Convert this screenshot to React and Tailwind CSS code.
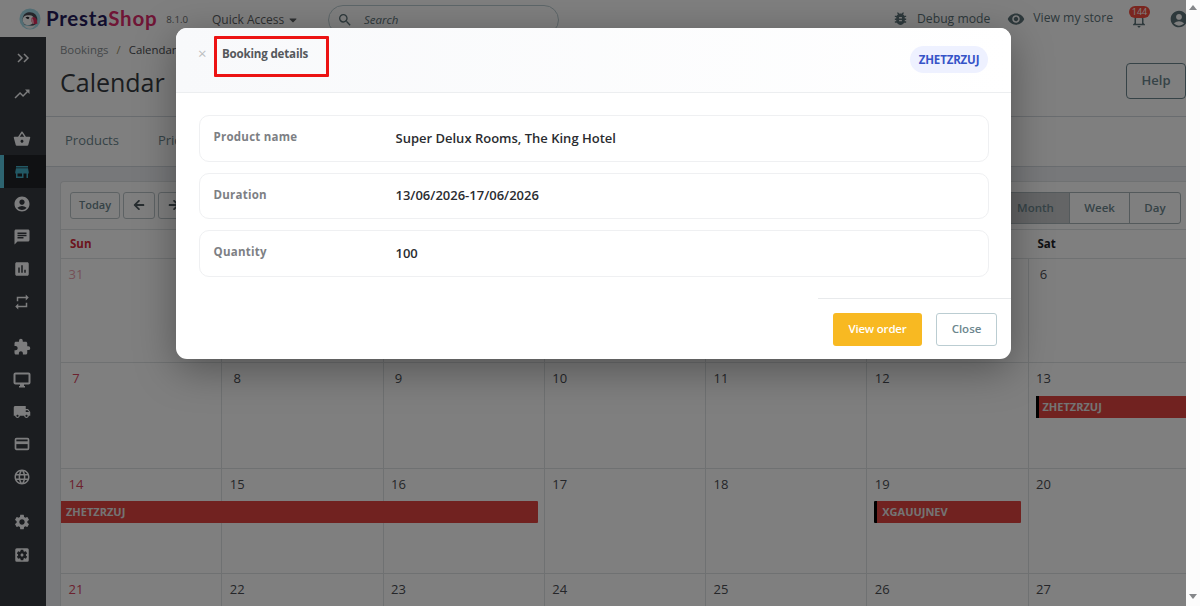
import React from 'react';
import {
  MdAccountCircle,
  MdAssessment,
  MdBugReport,
  MdChat,
  MdExtension,
  MdLanguage,
  MdLocalShipping,
  MdNotificationsNone,
  MdRemoveRedEye,
  MdRepeat,
  MdSearch,
  MdSettings,
  MdSettingsApplications,
  MdShoppingBasket,
  MdStore,
  MdTrendingUp,
} from 'react-icons/md';
import { FaArrowLeft, FaArrowRight, FaCaretDown } from 'react-icons/fa';

function MonitorIcon() {
  return (
    <svg viewBox="0 0 18 18" className="h-[18px] w-[18px]" fill="none" stroke="currentColor">
      <rect x="1.500" y="2.500" width="15" height="10" rx="1" strokeWidth="2" />
      <path d="M7 13h4v2h1v1.500H6V15h1z" fill="currentColor" stroke="none" />
    </svg>
  );
}

function CardIcon() {
  return (
    <svg viewBox="0 0 18 18" className="h-[18px] w-[18px]" fill="none" stroke="currentColor">
      <rect x="2.500" y="3.700" width="13" height="10.600" rx="1" strokeWidth="1.700" />
      <path d="M2 7.700h14" strokeWidth="2.800" />
    </svg>
  );
}

const menu = [
  { icon: MdTrendingUp, gap: 'h-[42px] mb-[8px]' },
  { icon: MdShoppingBasket, gap: 'h-[32px]' },
  { icon: MdStore, gap: 'h-[33px]', active: true },
  { icon: MdAccountCircle, gap: 'h-[32px]' },
  { icon: MdChat, gap: 'h-[33px]' },
  { icon: MdAssessment, gap: 'h-[32px]' },
  { icon: MdRepeat, gap: 'h-[33px] mb-[13px]' },
  { icon: MdExtension, gap: 'h-[32px]' },
  { icon: MonitorIcon, gap: 'h-[33px]' },
  { icon: MdLocalShipping, gap: 'h-[32px]' },
  { icon: CardIcon, gap: 'h-[32px]' },
  { icon: MdLanguage, gap: 'h-[33px] mb-[13px]' },
  { icon: MdSettings, gap: 'h-[32px]' },
  { icon: MdSettingsApplications, gap: 'h-[33px]' },
];

const weekDays = ['Sun', 'Mon', 'Tue', 'Wed', 'Thu', 'Fri', 'Sat'];

const weeks = [
  [31, 1, 2, 3, 4, 5, 6],
  [7, 8, 9, 10, 11, 12, 13],
  [14, 15, 16, 17, 18, 19, 20],
  [21, 22, 23, 24, 25, 26, 27],
];

// Events, keyed by the day they start on
const events = {
  13: { label: 'ZHETZRZUJ', style: 'ml-[7px] w-[154px] border-l-[3px] border-black pl-[4px]' },
  14: { label: 'ZHETZRZUJ', style: 'w-[477px] rounded-r-[1px] pl-[5px]' },
  19: { label: 'XGAUUJNEV', style: 'ml-[7px] w-[147px] rounded-[1px] border-l-[3px] border-black pl-[5px]' },
};

const details = [
  { label: 'Product name', value: 'Super Delux Rooms, The King Hotel' },
  { label: 'Duration', value: '13/06/2026-17/06/2026' },
  { label: 'Quantity', value: '100' },
];

function PuffinLogo() {
  return (
    <svg viewBox="0 0 24 24" className="h-[22px] w-[22px] shrink-0">
      <circle cx="12" cy="12" r="11.5" fill="#a4dbe8" />
      <path d="M4 11.500C4.500 6.500 8 4.500 12 4.500c4.500 0 8 3.500 8 8 0 3-1.500 5.500-4 7L6 18c-1.500-2-2.200-4-2-6.500z" fill="#4b4b55" />
      <path d="M4 12.500c.5-3.500 3.500-5 6.500-4.500 3.500-.5 6 1.500 6 5 0 3.500-3 5.500-6.500 5.500-3.500 0-6-2-6-6z" fill="#fff" />
      <path d="M14 10.500c3.500-1.500 6 .5 6 7-1.500-1-2.500.5-4 0-2-1-3.500-4.500-2-7z" fill="#df2c5c" />
      <path d="M14 10.500c1.500 1 2.500 4 2 7-2-1-3.500-4.500-2-7z" fill="#f7b3c2" />
      <path d="M7 10.500c1.500-1.300 3.500-1.300 4.500 0l-1.500 1.700z" fill="#25252d" />
      <path d="M5 18.500c3 1.500 9 2 13-.5-1.500 3.500-4 4.500-6 4.500-3 0-5.500-1.500-7-4z" fill="#f2f2f2" />
    </svg>
  );
}

function Header() {
  return (
    <header className="flex h-[37px] w-full items-center bg-white text-[12.200px] text-[#5c7278]">
      <div className="flex w-[193px] items-center pl-[19px]">
        <PuffinLogo />
        <span className="ml-[5px] text-[20.500px] leading-none font-bold tracking-[0.750px] text-[#251b5b] font-[Lato,sans-serif]">
          Presta<span className="text-[#df2c6c]">Shop</span>
        </span>
        <span className="mt-[4px] ml-[9px] text-[9.700px] text-[#6c6e70]">8.1.0</span>
      </div>
      <div className="mt-[2px] flex w-[135px] items-center gap-[3px] pl-[19px] text-[12px] whitespace-nowrap text-[#5d6163]">
        Quick Access <FaCaretDown className="text-[12px]" />
      </div>
      <div className="mt-[3px] flex h-[30px] w-[231px] items-center gap-[11px] rounded-full border border-[#bbcdd2] pl-[8px]">
        <MdSearch className="text-[16px]" />
        <span className="text-[11.500px] italic">Search</span>
      </div>
      <div className="ml-auto flex items-center whitespace-nowrap">
        <MdBugReport className="text-[17px]" />
        <span className="mt-[2px] ml-[8px]">Debug mode</span>
        <MdRemoveRedEye className="ml-[17px] text-[18px]" />
        <span className="ml-[8px]">View my store</span>
        <span className="relative ml-[17px] flex h-[21px] w-[18px] items-end justify-center">
          <MdNotificationsNone className="text-[18px]" />
          <span className="absolute top-[-2px] left-[-1px] flex h-[12px] w-[21px] items-center justify-center rounded-full bg-[#f54c3e] text-[9px] text-white">
            144
          </span>
        </span>
        <span className="ml-[21px] w-[17px] overflow-hidden">
          <MdAccountCircle className="text-[20px]" />
        </span>
      </div>
    </header>
  );
}

function Sidebar() {
  return (
    <nav className="flex w-[46px] shrink-0 flex-col bg-[#363a41] text-[18px] text-[#fafbfc]">
      <div className="flex h-[36px] items-end justify-center">
        <svg viewBox="0 0 16 16" className="mb-[7px] h-[16px] w-[16px]" fill="none" stroke="currentColor" strokeWidth="1.500">
          <path d="M3 4l4 4-4 4M9 4l4 4-4 4" />
        </svg>
      </div>
      {menu.map(({ icon: Icon, gap, active }, idx) => (
        <div
          key={idx}
          className={`flex shrink-0 items-center justify-center ${gap} ${
            active ? 'border-l-4 border-[#5bc8e0] bg-[#202226] pr-[6px] text-[#45b3ca]' : 'pr-[2px]'
          }`}
        >
          <Icon />
        </div>
      ))}
    </nav>
  );
}

function Toolbar() {
  return (
    <div className="flex h-[47px] items-center justify-between pr-[9px] pl-[9px] text-[#6c868e]">
      <div className="flex gap-[3px] text-[11px] font-semibold">
        <button className="h-[27px] w-[50px] rounded-[3px] border border-[#bbc5c9] pb-[1px]">Today</button>
        <button className="flex h-[27px] w-[32px] items-center justify-center rounded-[3px] border border-[#bbc5c9] pb-[2px] text-[12px] text-[#4f5b60]">
          <FaArrowLeft />
        </button>
        <button className="flex h-[27px] w-[32px] items-center justify-center rounded-[3px] border border-[#bbc5c9] pb-[2px] text-[12px] text-[#4f5b60]">
          <FaArrowRight />
        </button>
      </div>
      <div className="mt-[5px] flex h-[32px] overflow-hidden rounded-[3px] border border-[#a9b4b8] text-[11.500px] font-semibold">
        <button className="w-[67px] bg-[#c8cbcd]">Month</button>
        <button className="w-[61px] border-x border-[#a9b4b8]">Week</button>
        <button className="w-[50px]">Day</button>
      </div>
    </div>
  );
}

function Calendar() {
  return (
    <section className="mt-[14px] ml-[14px] w-[1130px] rounded-t-[4px] border-t border-l border-[#dfe2e5] bg-white">
      <Toolbar />
      <div className="grid grid-cols-[repeat(7,161.250px)] border-y border-[#dfe2e5]">
        {weekDays.map((day, idx) => (
          <div
            key={day}
            className={`h-[28px] pl-[9px] text-[11.500px] leading-[28px] font-bold ${
              idx === 0 ? 'text-[#d8283a]' : 'text-[#202226]'
            } ${idx > 0 && idx < 6 ? 'invisible' : ''}`}
          >
            {day}
          </div>
        ))}
      </div>
      {weeks.map((week, row) => (
        <div
          key={week[0]}
          className={`grid grid-cols-[repeat(7,161.250px)] border-b border-[#dfe2e5] ${row === 0 ? 'h-[104px]' : 'h-[105.500px]'}`}
        >
          {week.map((day, idx) => (
            <div
              key={day}
              className={`min-w-0 text-[13px] ${idx < 6 ? 'border-r border-[#dfe2e5]' : ''} ${
                idx === 0 ? 'text-[#d8445e]' : 'text-[#4a4d52]'
              }`}
            >
              <div className={`ml-[7px] h-[32.500px] w-[16px] text-center leading-[31px] ${day === 31 ? 'opacity-50' : ''}`}>{day}</div>
              {events[day] && (
                <div className={`relative z-10 h-[22px] bg-[#e24441] text-[11px] leading-[21px] font-bold text-[#e8e8e8] ${events[day].style}`}>
                  {events[day].label}
                </div>
              )}
            </div>
          ))}
        </div>
      ))}
    </section>
  );
}

function BookingModal() {
  return (
    <div role="dialog" className="absolute top-[28px] left-[176px] z-30 flex h-[331px] w-[835px] flex-col rounded-[11px] bg-white shadow-[0_10px_40px_rgba(0,0,0,0.35)]">
      <div className="flex h-[65px] shrink-0 items-start justify-between rounded-t-[11px] border-b border-[#eceef0] bg-linear-to-r from-[#f8f9fb] to-white pt-[8px] pr-[23px] pl-[21px]">
        <div className="flex items-center">
          <span className="mt-[-7px] w-[17px] pl-[1px] text-[15px] text-[#bcbec0]">×</span>
          <h4 className="h-[41px] w-[115px] rounded-[1px] border-[3px] border-[#ec1313] pl-[5px] text-[11.600px] leading-[30px] font-bold tracking-[-0.200px] text-[#55585c]">
            Booking details
          </h4>
        </div>
        <span className="mt-[10px] flex h-[27px] w-[78px] items-center justify-center rounded-full bg-[#eef1ff] text-[11.500px] font-bold tracking-[-0.150px] text-[#3654c8]">
          ZHETZRZUJ
        </span>
      </div>
      <div className="flex flex-col gap-[11px] px-[22.500px] pt-[22px]">
        {details.map((row) => (
          <div key={row.label} className="flex h-[46.500px] items-center rounded-[10px] border border-[#eff0f2] pl-[14px]">
            <span className="mt-[-3px] w-[182px] text-[11.500px] font-bold tracking-[0.250px] text-[#7d8084]">{row.label}</span>
            <span className="text-[13px] font-semibold text-[#2a2c30]">{row.value}</span>
          </div>
        ))}
      </div>
      <div className="mt-auto flex h-[61px] w-[193px] justify-end gap-[14px] self-end border-t border-[#e8eaec] pt-[14px] pr-[14px] text-[11.500px] font-semibold">
        <button className="h-[33px] w-[89px] rounded-[3px] bg-[#f8b922] pb-[1px] tracking-[-0.200px] text-white">View order</button>
        <button className="h-[33px] w-[61px] rounded-[3px] border border-[#bbcdd2] pb-[1px] text-[#6c868e]">Close</button>
      </div>
    </div>
  );
}

export default function App() {
  return (
    <div className="relative flex h-[606px] w-[1200px] overflow-hidden bg-white font-['Open_Sans','Noto_Sans',sans-serif]">
      <div className="relative flex w-[1186px] shrink-0 flex-col overflow-hidden">
        <Header />
        <div className="flex h-[569px]">
          <Sidebar />
          <main className="w-[1140px] overflow-hidden bg-[#eff1f5]">
            <div className="flex h-[80px] items-start justify-between border-b border-[#d3d9de] bg-white pl-[14px]">
              <div>
                <div className="mt-[4px] flex text-[11.400px] leading-[17px] text-[#8a9094]">
                  Bookings <span className="mx-[8px] text-[#a09060]">/</span>
                  <span className="text-[#4a4d52]">Calendar</span>
                </div>
                <h1 className="mt-[7px] text-[25px] leading-[34px] text-[#363a41]">Calendar</h1>
              </div>
              <button className="mt-[26px] h-[36px] w-[60px] rounded-[4px] border border-[#6c868e] text-[13px] font-semibold text-[#6c868e]">
                Help
              </button>
            </div>
            <div className="flex h-[50px] items-center gap-[39px] border-b border-[#d3d9de] bg-white pb-[2px] pl-[19px] text-[13px] text-[#6c868e]">
              <span>Products</span>
              <span>Prices</span>
            </div>
            <Calendar />
          </main>
        </div>
        <div className="absolute inset-0 z-20 bg-black/50" />
        <BookingModal />
      </div>
      {/* Page scrollbar */}
      <div className="flex w-[14px] flex-col items-center justify-between bg-[#fcfcfc] pt-[5px] pb-[7px]">
        <div className="h-0 w-0 border-x-[4px] border-b-[5px] border-x-transparent border-b-[#85878a]" />
        <div className="h-0 w-0 border-x-[4px] border-t-[5px] border-x-transparent border-t-[#85878a]" />
      </div>
    </div>
  );
}
